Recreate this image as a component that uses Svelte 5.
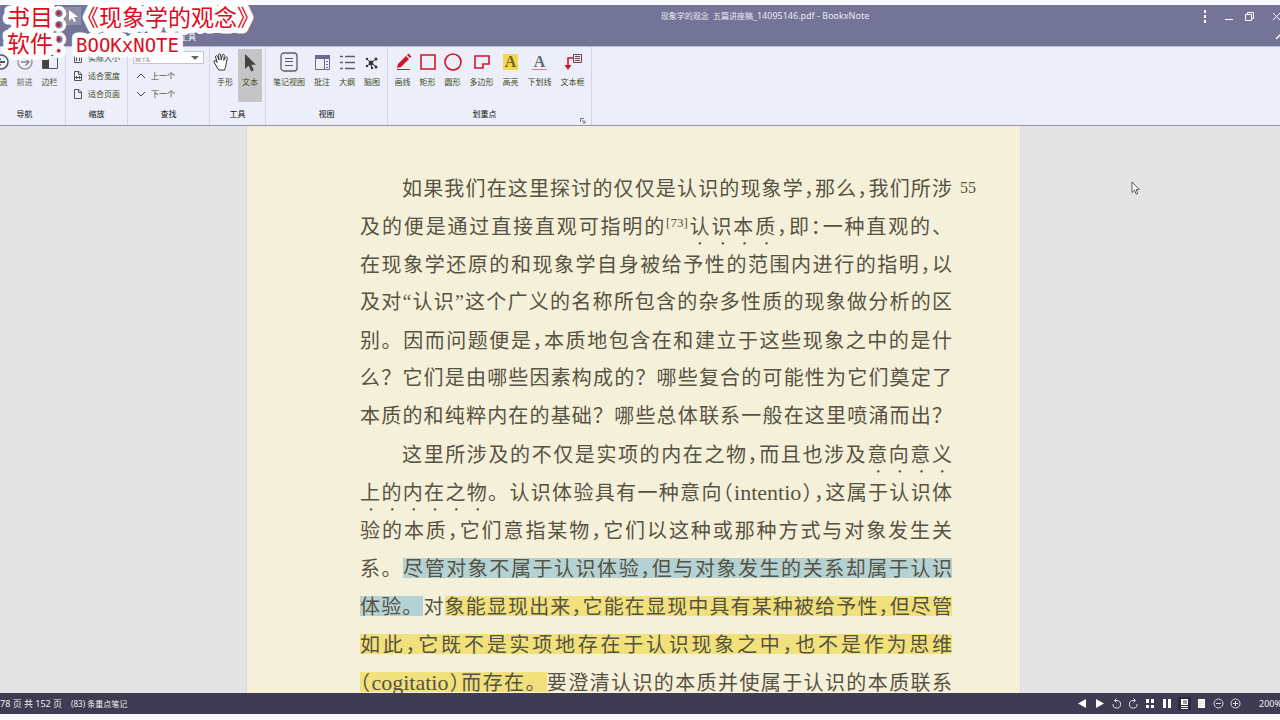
<script>
  let zoomMode = 'none';
  let activeTool = '文本';
  let searchTerm = '查找';

  const viewTools = ['笔记视图', '批注', '大纲', '脑图'];
  const markTools = ['画线', '矩形', '圆形', '多边形', '高亮', '下划线', '文本框'];
  const zoomTools = ['实际大小', '适合宽度', '适合页面'];

  // half-width marks in the source are set with the full-width glyphs
  const glyphs = { ',': '\uff0c', ':': '\uff1a', '(': '\uff08', ')': '\uff09' };

  // kinds: em = dotted emphasis, blue / yellow = highlight, sup = note number
  const lines = [
    { indent: true, note: '55', runs: [['如果我们在这里探讨的仅仅是认识的现象学,那么,我们所涉']] },
    { runs: [['及的便是通过直接直观可指明的'], ['[73]', 'sup'], ['认识本质', 'em'], [',即:一种直观的、']] },
    { runs: [['在现象学还原的和现象学自身被给予性的范围内进行的指明,以']] },
    { runs: [['及对“认识”这个广义的名称所包含的杂多性质的现象做分析的区']] },
    { runs: [['别。因而问题便是,本质地包含在和建立于这些现象之中的是什']] },
    { runs: [['么?它们是由哪些因素构成的?哪些复合的可能性为它们奠定了']] },
    { runs: [['本质的和纯粹内在的基础?哪些总体联系一般在这里喷涌而出?']] },
    { indent: true, runs: [['这里所涉及的不仅是实项的内在之物,而且也涉及'], ['意向意义', 'em']] },
    { runs: [['上的内在之物', 'em'], ['。认识体验具有一种意向(intentio),这属于认识体']] },
    { runs: [['验的本质,它们意指某物,它们以这种或那种方式与对象发生关']] },
    { runs: [['系。'], ['尽管对象不属于认识体验,但与对象发生的关系却属于认识', 'blue']] },
    { runs: [['体验。', 'blue'], ['对'], ['象能显现出来,它能在显现中具有某种被给予性,但尽管', 'yellow']] },
    { runs: [['如此,它既不是实项地存在于认识现象之中,也不是作为思维', 'yellow']] },
    { runs: [['(cogitatio)而存在。', 'yellow'], ['要澄清认识的本质并使属于认识的本质联系']] }
  ];

  function split(text) {
    return text.split(/([,:()]|[a-z]+)/).filter(Boolean);
  }
</script>

<div class="app">
  <header class="titlebar">
    <div class="title-row">
      <span class="quick">
        <svg width="16" height="18" viewBox="0 0 16 18"><path d="M4 3v11l3-3 2 4 2-1-2-4h4z" fill="#fff" /></svg>
      </span>
      <h1>现象学的观念&nbsp; 五篇讲座稿<span>_14095146.pdf - BookxNote</span></h1>
      <div class="window-buttons">
        <button aria-label="更多">
          <svg width="12" height="14" viewBox="0 0 12 14" fill="#fff"><path d="M5 1h2v3H5zM5 6h2v3H5zM5 11h2v3H5z" /></svg>
        </button>
        <button class="minimize" aria-label="最小化">
          <svg width="12" height="14" viewBox="0 0 12 14"><path d="M2 10.500h8" stroke="#fff" /></svg>
        </button>
        <button aria-label="还原">
          <svg width="12" height="14" viewBox="0 0 12 14" fill="none" stroke="#fff"><path d="M1.500 5.500h6v6h-6zM3.500 5V3.500h6v6H8" /></svg>
        </button>
        <button class="close" aria-label="关闭">
          <svg width="12" height="14" viewBox="0 0 12 14" stroke="#fff"><path d="M2 4l7 7M9 4l-7 7" /></svg>
        </button>
      </div>
    </div>
    <nav class="tab-row">
      <a href="#tools">工具</a>
      <button aria-label="折叠功能区">
        <svg width="12" height="12" viewBox="0 0 12 12" fill="none" stroke="#fff" stroke-width="1.500"><path d="M2 8l4-4 4 4" /></svg>
      </button>
    </nav>
  </header>

  <div class="ribbon" id="tools">
    <section class="group nav">
      <div class="tools">
        {#each ['后退', '前进', '边栏'] as tool, i}
          <button class="tool" class:dim={i === 1}>
            <svg width="20" height="20" viewBox="0 0 20 20" fill="none" stroke="#555" stroke-width="1.500">
              {#if i === 0}
                <circle cx="11" cy="10" r="7" /><path d="M15 10H7M10.500 6.500L7 10l3.500 3.500" stroke-width="2" />
              {:else if i === 1}
                <circle cx="10" cy="10" r="7" stroke="#999" /><path d="M6 10h8M10.500 6.500L14 10l-3.500 3.500" stroke="#888" />
              {:else}
                <path d="M2.500 3.500h15v13h-15z" stroke-width="1" /><path d="M3 4h6v12H3z" fill="#444" stroke="none" />
              {/if}
            </svg>
            <span>{tool}</span>
          </button>
        {/each}
      </div>
      <h2>导航</h2>
    </section>

    <section class="group zoom">
      <div class="rows">
        {#each zoomTools as tool, i}
          <button class="row" on:click={() => (zoomMode = tool)} aria-pressed={zoomMode === tool}>
            <svg width="10" height="12" viewBox="0 0 10 12" fill="none" stroke="#555">
              <path d="M1.500 1.500h4.500l2.500 2.500v6.500h-7zM5.500 1.500v3h3" />
              {#if i === 0}<path d="M3.500 5v4M6.500 5v4" />{/if}
              {#if i === 1}<path d="M2 7.500h6M4 6L2.500 7.500 4 9M6 6l1.500 1.500L6 9" />{/if}
            </svg>
            <span>{tool}</span>
          </button>
        {/each}
      </div>
      <h2>缩放</h2>
    </section>

    <section class="group find">
      <div class="rows">
        <div class="combo">
          <select bind:value={searchTerm} aria-label="查找">
            <option>查找</option>
          </select>
        </div>
        <button class="row">
          <svg width="10" height="12" viewBox="0 0 10 12" fill="none" stroke="#444"><path d="M1 8l4-4 4 4" /></svg>
          <span>上一个</span>
        </button>
        <button class="row">
          <svg width="10" height="12" viewBox="0 0 10 12" fill="none" stroke="#444"><path d="M1 4l4 4 4-4" /></svg>
          <span>下一个</span>
        </button>
      </div>
      <h2>查找</h2>
    </section>

    <section class="group select">
      <div class="tools">
        <button class="tool" class:active={activeTool === '手形'} on:click={() => (activeTool = '手形')}>
          <svg class="hand" width="20" height="20" viewBox="0 0 20 20" fill="#fff" stroke="#333" stroke-width="1" stroke-linejoin="round">
            <path d="M6 17l-4-7c-.6-1.600 1-2.200 1.800-1l1.400 1.600L3.600 5c-.4-1.600 1.400-2 1.900-.6L7 8l-.4-5c0-1.600 1.900-1.600 2.100 0L9.300 8l1-4.800c.4-1.500 2.200-1 2 .5L11.800 8.400l1.700-3c.8-1.200 2.300-.3 1.800 1L14 12c-.2 2.500-.8 4-1.400 6H7z" />
          </svg>
          <span>手形</span>
        </button>
        <button class="tool" class:active={activeTool === '文本'} on:click={() => (activeTool = '文本')}>
          <svg width="20" height="20" viewBox="0 0 20 20"><path d="M5 2v15l3.600-3.200 2.600 5.700 2.700-1.200-2.600-5.500H16z" fill="#444" /></svg>
          <span>文本</span>
        </button>
      </div>
      <h2>工具</h2>
    </section>

    <section class="group view">
      <div class="tools">
        {#each viewTools as tool, i}
          <button class="tool">
            <svg width="20" height="20" viewBox="0 0 20 20" fill="none" stroke="#5a5c66">
              {#if i === 0}
                <rect x="2" y="1" width="16" height="18" rx="3" stroke-width="1.300" /><path d="M6 6.500h8M6 9.500h8M6 13.500h8" />
              {:else if i === 1}
                <path d="M3.500 3.500h14v14h-14zM12.500 6v11" stroke="#686b8d" /><path d="M3 3h15v4H3z" fill="#686b8d" stroke="none" /><path d="M14 9.500h2M14 12.500h2M14 15.500h2" stroke="#686b8d" />
              {:else if i === 2}
                <path d="M3 4.500h3M3 10.500h3M3 16.500h3M8 4.500h10M8 10.500h10M8 16.500h10" stroke-width="1.600" />
              {:else}
                <path d="M9 11L5 7M9 11l5-4M9 11l6 4M9 11l-4 3M9 11l1 6" stroke="#333" />
                <g fill="#333" stroke="none">
                  <circle cx="9" cy="11" r="2.400" /><circle cx="5" cy="7" r="1.200" /><circle cx="14" cy="7" r="1.500" /><circle cx="14" cy="15" r="1.500" /><circle cx="5" cy="14" r="1.200" /><circle cx="10" cy="16" r="1.200" />
                </g>
              {/if}
            </svg>
            <span>{tool}</span>
          </button>
        {/each}
      </div>
      <h2>视图</h2>
    </section>

    <section class="group marks">
      <div class="tools">
        {#each markTools as tool, i}
          <button class="tool">
            {#if i === 4}
              <b class="letter lit">A</b>
            {:else if i === 5}
              <b class="letter underlined">A</b>
            {:else}
              <svg width="20" height="20" viewBox="0 0 20 20" fill="none" stroke="#d0142c" stroke-width="1.600">
                {#if i === 0}
                  <path d="M4 17.500h13" stroke-width="1" /><path d="M4 16l1-4 8-8 3 3-8 8zM14 3l1.500-1.500 3 3L17 6z" fill="#d0142c" stroke="none" />
                {:else if i === 1}
                  <path d="M3 3h14v14H3z" />
                {:else if i === 2}
                  <circle cx="10" cy="10" r="8" />
                {:else if i === 3}
                  <path d="M3 4h14v8h-6v4H3z" />
                {:else}
                  <path d="M10 6H5v9" /><path d="M1.500 13h7L5 18z" fill="#d0142c" stroke="none" /><path d="M10.500 2.500h8v8h-8zM12 4.500h5M12 6.500h5M12 8.500h5" stroke="#77424e" stroke-width="1" />
                {/if}
              </svg>
            {/if}
            <span>{tool}</span>
          </button>
        {/each}
      </div>
      <h2>划重点</h2>
      <button class="launcher" aria-label="划重点设置">
        <svg width="6" height="6" viewBox="0 0 6 6" fill="none" stroke="#777"><path d="M.5 4V.5H4M2 2l3 3M5 2.500V5H2.500" /></svg>
      </button>
    </section>
  </div>

  <main>
    <article class="page">
      {#each lines as line}
        <div class="line" class:indent={line.indent}>
          <p>{#each line.runs as [text, kind]}<span class={kind}>{#each split(text) as part}{#if glyphs[part]}<span class="half">{glyphs[part]}</span>{:else if /^[a-z]/.test(part)}<span class="latin">{part}</span>{:else}{part.replace(/\?/g, '\uff1f')}{/if}{/each}</span>{/each}</p>
          <aside>{line.note ?? ''}</aside>
        </div>
      {/each}
    </article>
  </main>

  <footer>
    <span class="pages">78 页 共 152 页</span>
    <span class="notes">(83) 条重点笔记</span>
    <div class="status-tools">
      {#each ['上一页', '下一页', '向左旋转', '向右旋转', '双页连续', '双页', '单页连续', '单页', '缩小', '放大'] as label, i}
        <button aria-label={label} class:current={i === 6}>
          <svg width="13" height="13" viewBox="0 0 13 13" fill="#fff">
            {#if i === 0}
              <path d="M10 2v9L2 6.500z" />
            {:else if i === 1}
              <path d="M3 2v9l8-4.500z" />
            {:else if i === 2}
              <path d="M5 3.500h2A3.800 3.800 0 1 1 3 7M6.500 1.500l-2 2 2 2" fill="none" stroke="#ddd" />
            {:else if i === 3}
              <path d="M8 3.500H6A3.800 3.800 0 1 0 10 7M6.500 1.500l2 2-2 2" fill="none" stroke="#ddd" />
            {:else if i === 4}
              <path d="M2 2h3v4H2zM7 2h3v4H7zM2 8h3v3H2zM7 8h3v3H7z" />
            {:else if i === 5}
              <path d="M2 2h3v9H2zM7 2h3v9H7z" />
            {:else if i === 6}
              <path d="M3 2h7v6H3zM3 9h7v1H3zM3 11h7v1H3z" /><path d="M5 4h4M5 6h4" stroke="#3e3b52" />
            {:else if i === 7}
              <path d="M3 2h7v9H3z" /><path d="M4 4.500h5M4 6.500h5M4 8.500h5" stroke="#ddd" />
            {:else}
              <circle cx="6.500" cy="6.500" r="4.500" fill="none" stroke="#ddd" /><path d={i === 8 ? 'M4 6.500h5' : 'M4 6.500h5M6.500 4v5'} stroke="#ddd" />
            {/if}
          </svg>
        </button>
      {/each}
      <span class="percent">200%</span>
    </div>
  </footer>

  <svg class="caption" width="270" height="64" viewBox="0 0 270 64">
    <text x="7" y="26">书目{'\uff1a'}《现象学的观念》</text>
    <text x="7" y="52">软件{'\uff1a'}<tspan class="mono">BOOKxNOTE</tspan></text>
  </svg>

  <svg class="pointer" width="9" height="15" viewBox="0 0 9 15"><path d="M1 1v10.500l2.500-2.300 1.700 4 1.500-.7L5 8.600h3.300z" fill="#fff" stroke="#333" stroke-width=".8" /></svg>
</div>

<style>
  :global(body) {
    margin: 0;
  }

  .app {
    position: relative;
    display: flex;
    flex-direction: column;
    height: 100vh;
    box-sizing: border-box;
    padding: 5px 0 6px;
    overflow: hidden;
    background: #f8f9fb;
    font-family: 'Noto Sans', 'Noto Sans CJK SC', sans-serif;
    font-size: 8px;
    line-height: 12px;
    color: #222;
  }

  button {
    padding: 0;
    border: 0;
    background: none;
    font: inherit;
    color: inherit;
    cursor: pointer;
  }

  svg {
    display: block;
    flex: none;
  }

  .titlebar {
    flex: none;
    background: #737497;
    color: #fff;
    border-bottom: 1px solid #b9bdd4;
  }

  .title-row {
    display: flex;
    align-items: center;
    justify-content: space-between;
    height: 22px;
    padding-left: 65px;
  }

  .quick {
    background: #8f90a8;
  }

  h1 {
    margin: 0;
    padding-left: 250px;
    flex: 1;
    text-align: center;
    font-size: 8px;
    font-weight: 400;
    color: #e8e9f3;
    white-space: nowrap;
  }

  h1 span {
    font-size: 9px;
  }

  .window-buttons {
    display: flex;
    gap: 9px;
    margin-right: -3px;
  }

  .minimize {
    margin-left: 3px;
  }

  .close {
    margin-left: 6px;
  }

  .tab-row {
    display: flex;
    justify-content: space-between;
    align-items: center;
    height: 19px;
    padding-left: 180px;
    margin-right: -6px;
  }

  .tab-row a {
    color: #fff;
    text-decoration: none;
  }

  .ribbon {
    flex: none;
    display: flex;
    height: 78px;
    background: #eceffa;
    border-bottom: 1px solid #9295ad;
  }

  .group {
    position: relative;
    display: flex;
    flex-direction: column;
    justify-content: space-between;
    flex: none;
    box-sizing: border-box;
    padding: 2px 0 5px;
    border-right: 1px solid #d2d5e2;
  }

  .group h2 {
    margin: 0;
    text-align: center;
    font-size: 8px;
    font-weight: 400;
    color: #111;
  }

  .nav {
    width: 82px;
    margin-left: -16px;
  }

  .zoom {
    width: 62px;
  }

  .find {
    width: 82px;
  }

  .select {
    width: 56px;
  }

  .view {
    width: 122px;
  }

  .marks {
    width: 204px;
  }

  .marks h2 {
    padding-right: 10px;
  }

  .tools {
    display: flex;
    justify-content: center;
    gap: 1px;
  }

  .tool {
    display: flex;
    flex-direction: column;
    align-items: center;
    gap: 4px;
    height: 53px;
    padding: 3px 4px 0;
    box-sizing: border-box;
    white-space: nowrap;
    color: #3c4a22;
  }

  .tool svg {
    margin: 0 -2px;
  }

  .tool .hand {
    margin-left: -8px;
  }

  .tool.active {
    background: #c5c5c7;
  }

  .tool.dim {
    color: #626a55;
  }

  .letter {
    width: 15px;
    height: 16px;
    margin: 2px 0;
    font-family: 'Liberation Serif', serif;
    font-size: 16px;
    line-height: 16px;
    text-align: center;
    color: #66686f;
  }

  .letter.lit {
    background: #f7d64f;
    color: #75652a;
  }

  .letter.underlined {
    box-sizing: border-box;
    line-height: 15px;
    border-bottom: 1px solid #d0808c;
  }

  .rows {
    display: flex;
    flex-direction: column;
    gap: 6px;
    padding: 3px 5px 0 7px;
  }

  .row {
    display: flex;
    align-items: center;
    gap: 5px;
    color: #3c4a22;
    white-space: nowrap;
  }

  .find .rows {
    padding-top: 2px;
    padding-left: 5px;
  }

  .find .row {
    padding-left: 3px;
  }

  .combo {
    position: relative;
    height: 13px;
  }

  .combo::after {
    content: '';
    position: absolute;
    right: 5px;
    top: 5px;
    border: 4px solid transparent;
    border-top-color: #666;
    border-bottom: 0;
    pointer-events: none;
  }

  select {
    display: block;
    width: 100%;
    height: 13px;
    padding: 0;
    appearance: none;
    border: 1px solid #c4c7d2;
    border-radius: 0;
    background: #fff;
    font: inherit;
    line-height: 11px;
    color: #999;
  }

  .launcher {
    position: absolute;
    right: 5px;
    bottom: 1px;
  }

  main {
    flex: 1;
    min-height: 0;
    overflow: hidden;
    display: flex;
    justify-content: center;
    padding-right: 13px;
    background: #e4e4e4;
  }

  .page {
    width: 61%;
    box-sizing: border-box;
    flex: none;
    height: max-content;
    padding: 43px 0 20px 113px;
    background: #f5f0d9;
    box-shadow: 0 0 1px #aaa;
    font-family: 'Liberation Serif', 'Noto Sans CJK SC', serif;
    font-size: 20px;
    line-height: 38px;
    color: #575343;
  }

  .line {
    display: flex;
    height: 38px;
  }

  .line.indent {
    padding-left: 42px;
  }

  .line p {
    flex: 1;
    margin: 0;
    white-space: nowrap;
    text-align: justify;
    text-align-last: justify;
  }

  .line aside {
    width: 60px;
    padding-left: 8px;
    font-size: 16px;
  }

  .half {
    font-family: 'Noto Sans CJK SC', sans-serif;
    font-feature-settings: 'halt' 1;
  }

  .latin {
    font-size: 22px;
    line-height: 22px;
  }

  .em {
    text-emphasis: filled dot;
    text-emphasis-position: under left;
  }

  .sup {
    position: relative;
    top: -7px;
    font-size: 13px;
    line-height: 13px;
  }

  .blue {
    background: linear-gradient(#b4d2d3, #b4d2d3) 0 0 / 100% 20px no-repeat;
  }

  .yellow {
    background: linear-gradient(#f1e17d, #f1e17d) 0 0 / 100% 20px no-repeat;
  }

  footer {
    flex: none;
    display: flex;
    align-items: center;
    height: 21px;
    overflow: hidden;
    background: #3e3b52;
    color: #eee;
    white-space: nowrap;
  }

  .pages,
  .percent {
    font-size: 9px;
  }

  .notes {
    margin-left: 9px;
  }

  .status-tools {
    display: flex;
    align-items: center;
    gap: 4px;
    margin-left: auto;
  }

  .status-tools .current {
    background: #2a2839;
  }

  .percent {
    margin-left: 13px;
    margin-right: -2px;
  }

  .caption {
    position: absolute;
    top: 0;
    left: 0;
    font-family: 'Noto Sans CJK SC', sans-serif;
    font-size: 23px;
    text-spacing-trim: space-all;
    fill: #e00b22;
    stroke: #fff;
    stroke-width: 11px;
    stroke-linejoin: round;
    paint-order: stroke fill;
    pointer-events: none;
  }

  .mono {
    font-family: 'DejaVu Sans Mono', monospace;
    font-size: 19px;
  }

  .pointer {
    position: absolute;
    top: 181px;
    left: 1131px;
  }
</style>
